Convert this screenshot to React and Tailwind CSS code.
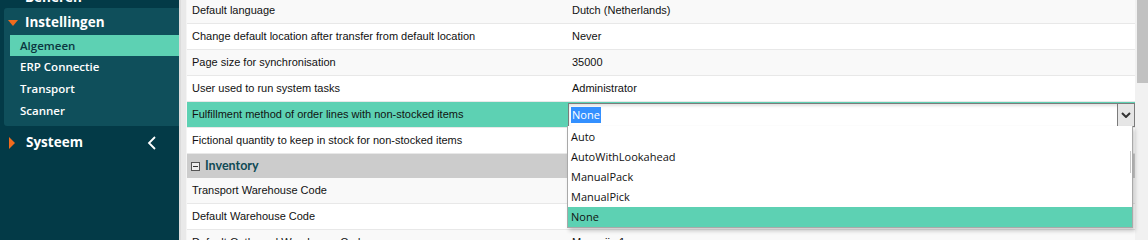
import React from "react";

const rows = [
  { label: "Default language", value: "Dutch (Netherlands)", alt: true },
  { label: "Change default location after transfer from default location", value: "Never" },
  { label: "Page size for synchronisation", value: "35000", alt: true },
  { label: "User used to run system tasks", value: "Administrator" },
];

const options = ["Auto", "AutoWithLookahead", "ManualPack", "ManualPick", "None"];

const Sidebar = () => (
  <div className="w-[179px] shrink-0 bg-[#033a47] font-['Open_Sans',sans-serif] text-white overflow-hidden">
    {/* vorige sectie, grotendeels buiten beeld */}
    <div className="h-[8px] relative overflow-hidden">
      <span className="absolute left-[25px] top-[-9px] text-[13.5px] font-bold leading-none">Beheren</span>
    </div>
    <div className="ml-[4px] bg-[#0f4f5b] rounded-l-[3px] pb-[4px]">
      <div className="flex items-center h-[27px] pl-[4px] pt-[2px]">
        <span className="w-0 h-0 border-l-[5px] border-r-[5px] border-t-[6px] border-l-transparent border-r-transparent border-t-[#f26b1d]" />
        <span className="ml-[7px] text-[13.5px] font-bold">Instellingen</span>
      </div>
      <div className="ml-[6px] h-[21px] bg-[#5dd1b3] text-[#0b3640] text-[11.5px] font-semibold flex items-center pl-[10px]">
        Algemeen
      </div>
      {["ERP Connectie", "Transport", "Scanner"].map((t) => (
        <div key={t} className="h-[22px] flex items-center pl-[16px] text-[11.5px] font-semibold">
          {t}
        </div>
      ))}
    </div>
    <div className="flex items-center h-[32px] pl-[9px] pt-[1px]">
      <span className="w-0 h-0 border-t-[6px] border-b-[6px] border-l-[6px] border-t-transparent border-b-transparent border-l-[#f26b1d]" />
      <span className="ml-[11px] text-[13.5px] font-bold">Systeem</span>
      <svg className="ml-[64px]" width="10" height="14" viewBox="0 0 10 14">
        <path d="M8 1 L2 7 L8 13" fill="none" stroke="#fff" strokeWidth="1.8" />
      </svg>
    </div>
  </div>
);

const Row = ({ label, value, alt }) => (
  <div className={`flex h-[26px] items-center border-b border-[#e8e8e8] ${alt ? "bg-[#f9f9f9]" : "bg-white"}`}>
    <div className="w-[381px] pl-[5px] whitespace-nowrap">{label}</div>
    <div className="pl-[4px]">{value}</div>
  </div>
);

export default function App() {
  return (
    <div className="flex h-[240px] w-[1148px] overflow-hidden bg-white">
      <Sidebar />
      <div className="w-[8px] shrink-0 bg-[#e9e9e9] border-l-2 border-[#dcdcdc] border-r border-r-[#f4f4f4]" />
      <div className="flex-1 font-['Liberation_Sans',Arial,sans-serif] text-[11px] text-[#111] relative">
        <div className="-mt-[2px]">
          {rows.map((r) => (
            <Row key={r.label} {...r} />
          ))}
          {/* actieve rij met keuzelijst */}
          <div className="flex h-[26px] items-center bg-[#5dd1b3] border-b border-[#e8e8e8]">
            <div className="w-[381px] pl-[5px]">Fulfillment method of order lines with non-stocked items</div>
            <div className="flex-1 h-[24px] flex border border-[#7b7b7b] bg-white shadow-[inset_0_2px_3px_rgba(0,0,0,0.12)] font-['Open_Sans',sans-serif]">
              <div className="flex-1 flex items-center pl-[2px]">
                <span className="bg-[#3390ff] text-white px-[1px] leading-[16px] text-[11px]">None</span>
              </div>
              <div className="w-[17px] bg-[#e6e6e6] border-l border-[#7b7b7b] flex items-center justify-center">
                <svg width="10" height="6" viewBox="0 0 10 6">
                  <path d="M1 1 L5 5 L9 1" fill="none" stroke="#333" strokeWidth="2" />
                </svg>
              </div>
            </div>
          </div>
          <Row label="Fictional quantity to keep in stock for non-stocked items" value="" />
          <div className="flex h-[24px] items-center bg-[#cccccc] pl-[4px] gap-[5px]">
            <span className="w-[9px] h-[9px] border border-[#555] bg-[#eee] flex items-center justify-center">
              <span className="w-[5px] h-[1px] bg-[#333]" />
            </span>
            <span className="font-['Lato',sans-serif] font-bold text-[12.5px] text-[#0f4a55]">Inventory</span>
          </div>
          <Row label="Transport Warehouse Code" value="" alt />
          <Row label="Default Warehouse Code" value="" />
          <Row label="Default Outbound Warehouse Code" value="Magazijn 1" alt />

          {/* open keuzelijst */}
          <div className="absolute left-[380px] top-[126px] w-[566px] bg-white border border-[#a9a9a9] border-t-0 shadow-[2px_3px_4px_rgba(0,0,0,0.2)] font-['Open_Sans',sans-serif] text-[11px] text-[#111] pt-[1px]">
            {options.map((o) => (
              <div key={o} className={`h-[20px] flex items-center pl-[3px] ${o === "None" ? "bg-[#5dd1b3]" : ""}`}>
                {o}
              </div>
            ))}
            <div className="absolute right-[1px] top-[25px] w-[1px] h-[22px] bg-[#c8c8c8]" />
          </div>
        </div>
      </div>
      <div className="w-[13px] shrink-0 bg-[#f1f1f1] pl-[2px]">
        <div className="h-[83px] bg-[#c1c1c1]" />
      </div>
    </div>
  );
}
